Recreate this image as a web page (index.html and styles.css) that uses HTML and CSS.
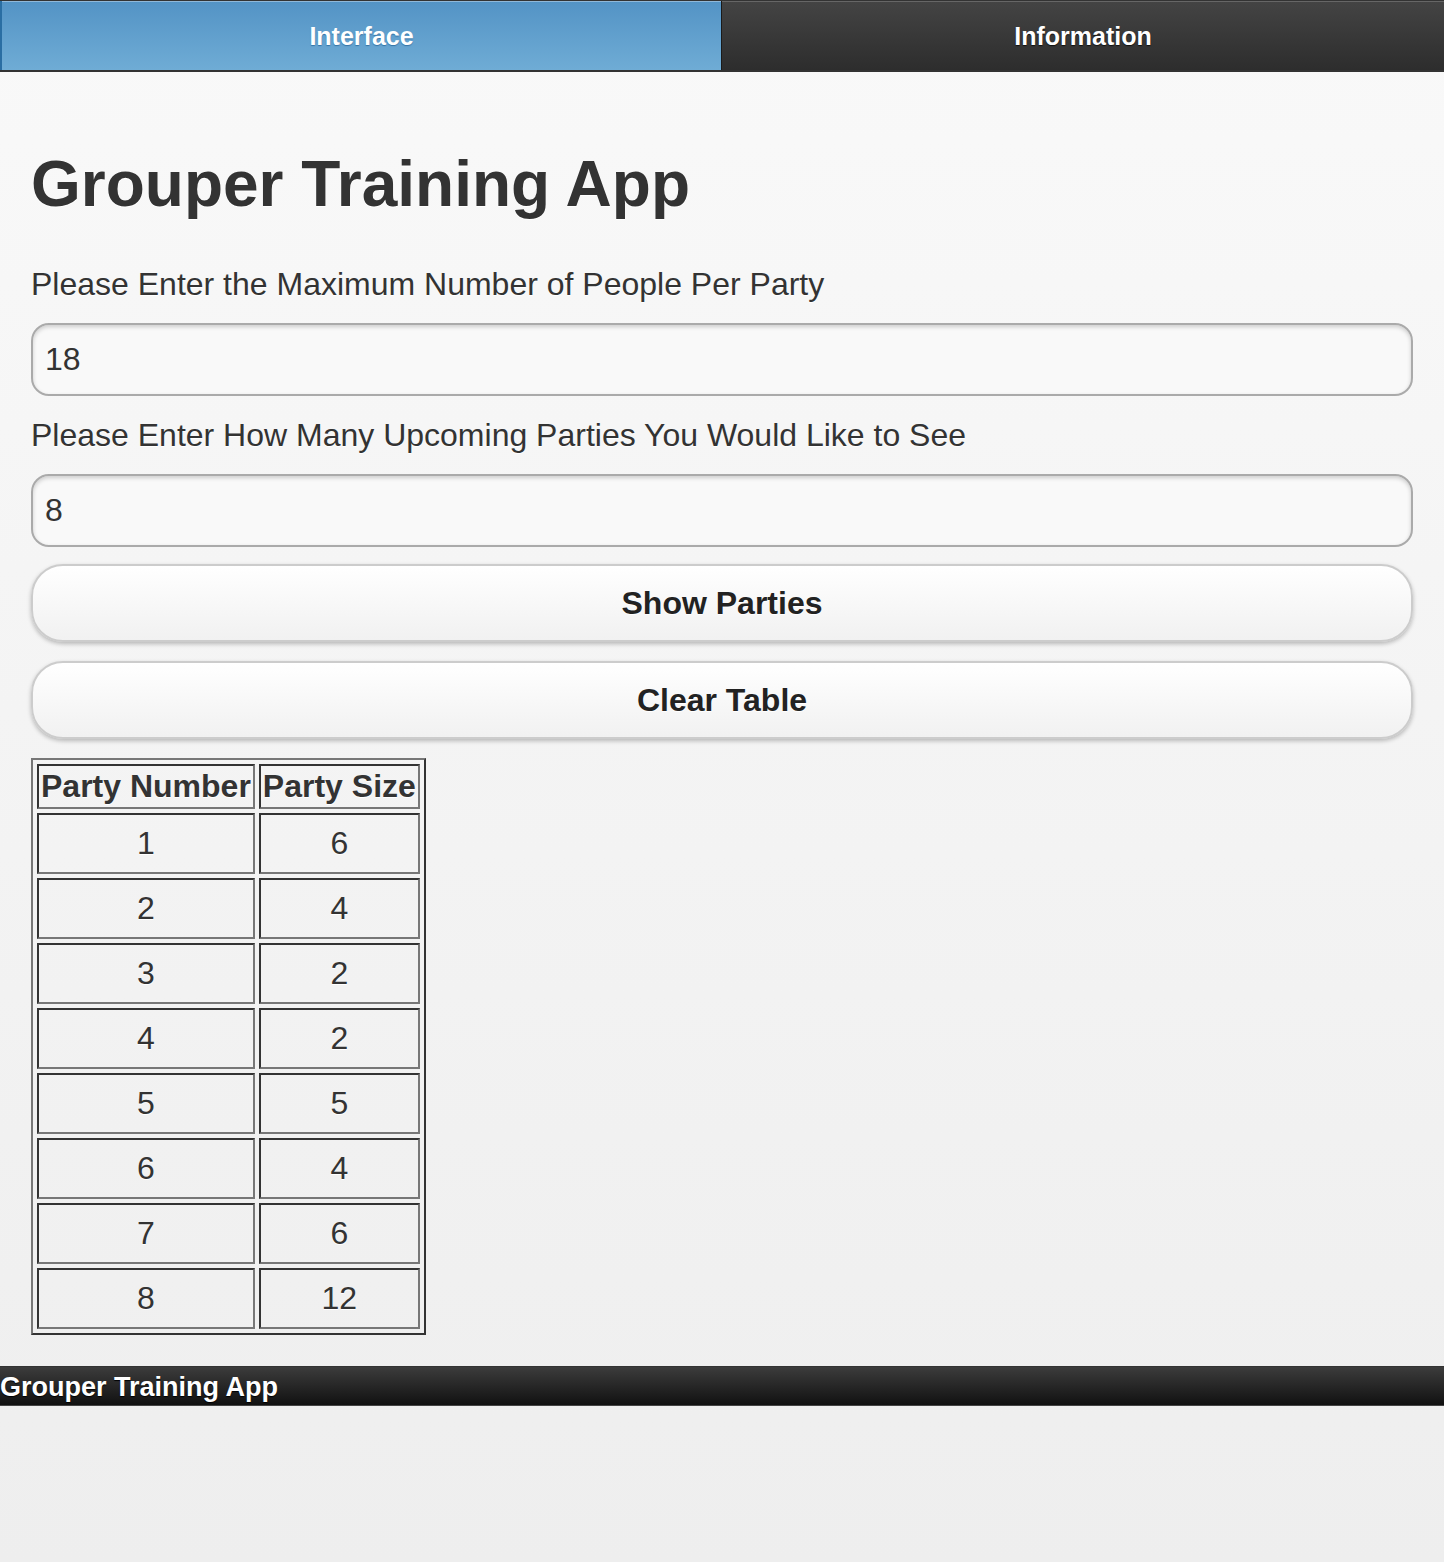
FILE: index.html
```html
<!DOCTYPE html>
<html lang="en">
<head>
<meta charset="utf-8">
<title>Grouper Training App</title>
<link rel="stylesheet" href="styles.css">
</head>
<body>
<div class="page">
  <nav class="navbar">
    <a class="tab tab-active" href="#">Interface</a>
    <a class="tab tab-dark" href="#">Information</a>
  </nav>
  <main class="content">
    <h1 class="title">Grouper Training App</h1>
    <label class="field-label" for="maxPeople">Please Enter the Maximum Number of People Per Party</label>
    <input class="text-input" id="maxPeople" type="text" value="18">
    <label class="field-label" for="numParties">Please Enter How Many Upcoming Parties You Would Like to See</label>
    <input class="text-input" id="numParties" type="text" value="8">
    <button class="btn" type="button">Show Parties</button>
    <button class="btn" type="button">Clear Table</button>
    <table class="parties" border="1">
      <thead>
        <tr><th>Party Number</th><th>Party Size</th></tr>
      </thead>
      <tbody>
        <tr><td>1</td><td>6</td></tr>
        <tr><td>2</td><td>4</td></tr>
        <tr><td>3</td><td>2</td></tr>
        <tr><td>4</td><td>2</td></tr>
        <tr><td>5</td><td>5</td></tr>
        <tr><td>6</td><td>4</td></tr>
        <tr><td>7</td><td>6</td></tr>
        <tr><td>8</td><td>12</td></tr>
      </tbody>
    </table>
  </main>
  <footer class="footer">Grouper Training App</footer>
</div>
</body>
</html>
```
FILE: styles.css
```css
html, body {
  margin: 0;
  padding: 0;
}
body {
  font-family: "Liberation Sans", Arial, Helvetica, sans-serif;
  color: #333;
  background: linear-gradient(#f9f9f9, #eeeeee);
  min-height: 1562px;
}
.page {
  display: flex;
  flex-direction: column;
}
.navbar {
  display: flex;
  border-top: 1px solid #333;
  border-bottom: 2px solid #333;
}
.tab {
  flex: none;
  width: 50%;
  height: 69px;
  padding-top: 2px;
  display: flex;
  align-items: center;
  justify-content: center;
  font-size: 25px;
  font-weight: bold;
  color: #fff;
  text-decoration: none;
  box-sizing: border-box;
}
.tab-active {
  background: linear-gradient(#5393c5, #6facd5);
  border-left: 2px solid #2a6ea3;
  border-right: 1px solid #1a1a1a;
  box-shadow: inset 0 1px 0 rgba(255,255,255,0.35);
  text-shadow: 0 1px 1px #3373a5;
}
.tab-dark {
  background: linear-gradient(#444444, #2d2d2d);
  box-shadow: inset 0 1px 0 #666;
  text-shadow: 0 1px 1px #111;
}
.content {
  display: flex;
  flex-direction: column;
  align-items: stretch;
  padding: 0 31px;
}
.title {
  margin: 75px 0 0;
  font-size: 64px;
  line-height: 74px;
  font-weight: bold;
  color: #333;
  text-shadow: 0 1px 0 #fff;
}
.field-label {
  font-size: 32px;
  color: #333;
  text-shadow: 0 1px 0 #fff;
  margin-top: 45px;
}
.text-input + .field-label {
  margin-top: 21px;
}
.text-input {
  margin-top: 20px;
  height: 73px;
  box-sizing: border-box;
  border: 2px solid #aaa;
  border-radius: 18px;
  background: #f9f9f9;
  box-shadow: inset 0 2px 4px rgba(0,0,0,0.18);
  font-family: "Liberation Sans", Arial, sans-serif;
  font-size: 32px;
  color: #333;
  padding: 0 12px;
  outline: none;
}
.btn {
  margin-top: 17px;
  height: 78px;
  box-sizing: border-box;
  border: 2px solid #ccc;
  border-radius: 32px;
  background: linear-gradient(#ffffff, #f1f1f1);
  box-shadow: 0 2px 4px rgba(0,0,0,0.25);
  font-family: "Liberation Sans", Arial, sans-serif;
  font-size: 32px;
  font-weight: bold;
  color: #222;
  text-shadow: 0 1px 0 #fff;
  cursor: pointer;
}
.btn + .btn {
  margin-top: 19px;
}
.parties {
  align-self: flex-start;
  margin-top: 19px;
  border-collapse: separate;
  border-spacing: 4px;
  border: 2px solid;
  border-color: #777 #333 #333 #777;
  font-size: 32px;
  color: #333;
  text-shadow: 0 1px 0 #fff;
}
.parties th,
.parties td {
  border: 2px solid;
  border-color: #333 #777 #777 #333;
  padding: 2px 2px;
  text-align: center;
}
.parties th {
  font-weight: bold;
}
.parties td {
  height: 57px;
  padding: 0 2px;
}
.footer {
  margin-top: 31px;
  height: 40px;
  box-sizing: border-box;
  background: linear-gradient(#3c3c3c, #111111);
  border-top: 1px solid #333;
  border-bottom: 1px solid #444;
  color: #fff;
  font-size: 27px;
  font-weight: bold;
  line-height: 40px;
  text-shadow: 0 1px 1px #000;
  padding: 0;
}
```
